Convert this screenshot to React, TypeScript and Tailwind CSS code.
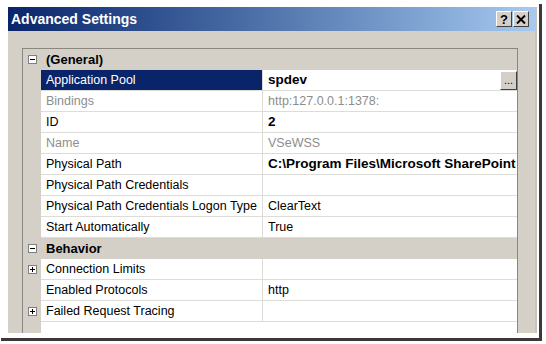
import React from "react";

type Row = {
  label: string;
  value?: string;
  cat?: boolean;
  bold?: boolean;
  grey?: boolean;
  selected?: boolean;
  button?: boolean;
  expand?: boolean;
};

const rows: Row[] = [
  { label: "(General)", cat: true },
  { label: "Application Pool", value: "spdev", bold: true, selected: true, button: true },
  { label: "Bindings", value: "http:127.0.0.1:1378:", grey: true },
  { label: "ID", value: "2", bold: true },
  { label: "Name", value: "VSeWSS", grey: true },
  { label: "Physical Path", value: "C:\\Program Files\\Microsoft SharePoint Extensions", bold: true },
  { label: "Physical Path Credentials", value: "" },
  { label: "Physical Path Credentials Logon Type", value: "ClearText" },
  { label: "Start Automatically", value: "True" },
  { label: "Behavior", cat: true },
  { label: "Connection Limits", value: "", expand: true },
  { label: "Enabled Protocols", value: "http" },
  { label: "Failed Request Tracing", value: "", expand: true },
];

function ExpandBox({ open }: { open: boolean }) {
  return (
    <svg width="9" height="9" viewBox="0 0 9 9" className="block">
      <rect x="0.5" y="0.5" width="8" height="8" fill="#fff" stroke="#7f7f7f" />
      <path d="M2 4.5h5" stroke="#000" />
      {!open && <path d="M4.5 2v5" stroke="#000" />}
    </svg>
  );
}

function CaptionButton({ children }: { children: React.ReactNode }) {
  return (
    <div className="flex h-[16px] w-[16px] items-center justify-center border border-t-white border-l-white border-r-[#404040] border-b-[#404040] bg-[#d4d0c8] text-[13px] font-bold leading-none text-black">
      {children}
    </div>
  );
}

function GridRow({ row }: { row: Row }) {
  if (row.cat) {
    return (
      <div className="flex h-[21px] items-center bg-[#d4d0c8]">
        <div className="flex w-[18px] justify-center">
          <ExpandBox open />
        </div>
        <span className="pl-[5px] text-[13px] font-bold text-black">{row.label}</span>
      </div>
    );
  }
  return (
    <div className="flex h-[21px]">
      <div className="flex w-[18px] shrink-0 items-center justify-center bg-[#d4d0c8]">
        {row.expand && <ExpandBox open={false} />}
      </div>
      <div
        className={`flex w-[221px] shrink-0 items-center border-b border-[#dedcd6] pl-[5px] ${
          row.selected ? "bg-[#0a246a] text-white" : row.grey ? "bg-white text-[#8d8d8d]" : "bg-white text-black"
        }`}
      >
        <span className="whitespace-nowrap">{row.label}</span>
      </div>
      <div className="w-px shrink-0 bg-[#dedcd6]" />
      <div
        className={`flex w-[254px] shrink-0 items-center overflow-hidden border-b border-[#dedcd6] bg-white pl-[5px] ${
          row.grey ? "text-[#8d8d8d]" : "text-black"
        } ${row.bold ? "text-[13.5px] font-bold" : ""}`}
      >
        <span className="min-w-0 flex-1 overflow-hidden whitespace-nowrap">{row.value}</span>
        {row.button && (
          <div className="flex h-[19px] w-[17px] shrink-0 items-end justify-center border border-t-white border-l-white border-r-[#404040] border-b-[#404040] bg-[#d4d0c8] pb-[3px] text-[11px] font-normal leading-none text-black">
            ...
          </div>
        )}
      </div>
    </div>
  );
}

export default function App() {
  return (
    <div className="relative h-[344px] w-[546px] overflow-hidden bg-white font-['Liberation_Sans',Arial,sans-serif] text-[12.5px]">
      {/* picture drop shadow */}
      <div className="absolute left-[539px] top-[4px] h-[337px] w-[3px] bg-[#3a3a3a]" />
      <div className="absolute left-[1px] top-[338px] h-[3px] w-[541px] bg-[#3a3a3a]" />

      <div className="pl-[8px] pt-[7px]">
        <div className="flex h-[326px] w-[529px] flex-col overflow-hidden border-r-2 border-[#c8c4bc] bg-[#d4d0c8]">
          {/* title bar */}
          <div className="flex h-[24px] shrink-0 items-center justify-between bg-gradient-to-r from-[#0a246a] to-[#a6caf0] pl-[3px] pr-[6px]">
            <span className="text-[14px] font-bold text-white">Advanced Settings</span>
            <div className="flex gap-[1px]">
              <CaptionButton>?</CaptionButton>
              <CaptionButton>
                <svg width="10" height="9" viewBox="0 0 10 9">
                  <path d="M1 0.5l8 8M9 0.5l-8 8" stroke="#000" strokeWidth="2" />
                </svg>
              </CaptionButton>
            </div>
          </div>

          {/* body */}
          <div className="flex flex-1 pl-[14px] pt-[17px]">
            <div className="flex w-[496px] shrink-0 flex-col overflow-hidden border-l border-t border-r border-[#8a877f] bg-white">
              {rows.map((r) => (
                <GridRow key={r.label} row={r} />
              ))}
              <div className="flex flex-1">
                <div className="w-[18px] bg-[#d4d0c8]" />
                <div className="flex-1 bg-white" />
              </div>
            </div>
          </div>
        </div>
      </div>
    </div>
  );
}
